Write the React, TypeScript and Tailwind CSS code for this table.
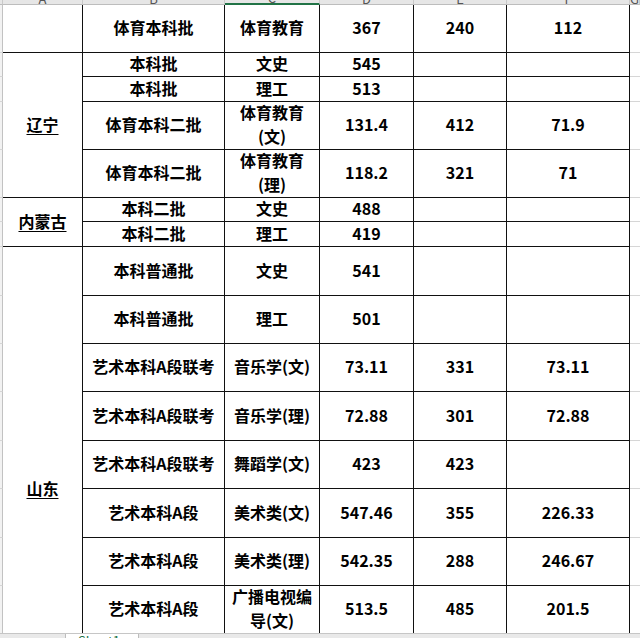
import React from "react";

type Row = { b: string; c: string[]; d: string; e: string; f: string };

const rows: Row[] = [
  { b: "体育本科批", c: ["体育教育"], d: "367", e: "240", f: "112" },
  { b: "本科批", c: ["文史"], d: "545", e: "", f: "" },
  { b: "本科批", c: ["理工"], d: "513", e: "", f: "" },
  { b: "体育本科二批", c: ["体育教育", "(文)"], d: "131.4", e: "412", f: "71.9" },
  { b: "体育本科二批", c: ["体育教育", "(理)"], d: "118.2", e: "321", f: "71" },
  { b: "本科二批", c: ["文史"], d: "488", e: "", f: "" },
  { b: "本科二批", c: ["理工"], d: "419", e: "", f: "" },
  { b: "本科普通批", c: ["文史"], d: "541", e: "", f: "" },
  { b: "本科普通批", c: ["理工"], d: "501", e: "", f: "" },
  { b: "艺术本科A段联考", c: ["音乐学(文)"], d: "73.11", e: "331", f: "73.11" },
  { b: "艺术本科A段联考", c: ["音乐学(理)"], d: "72.88", e: "301", f: "72.88" },
  { b: "艺术本科A段联考", c: ["舞蹈学(文)"], d: "423", e: "423", f: "" },
  { b: "艺术本科A段", c: ["美术类(文)"], d: "547.46", e: "355", f: "226.33" },
  { b: "艺术本科A段", c: ["美术类(理)"], d: "542.35", e: "288", f: "246.67" },
  { b: "艺术本科A段", c: ["广播电视编", "导(文)"], d: "513.5", e: "485", f: "201.5" },
];

// province cell that starts on a given row index
const provinces: Record<number, { name: string; span: string; pad?: string }> = {
  0: { name: "", span: "" },
  1: { name: "辽宁", span: "row-span-4" },
  5: { name: "内蒙古", span: "row-span-2" },
  7: { name: "山东", span: "row-span-8", pad: "pt-[229px] !items-start" },
};

const cell = "flex items-center justify-center text-center border-r border-b border-[#111] leading-6 pb-[3px]";

const Header = () => (
  <div className="grid h-[5px] grid-cols-[3px_80px_142px_95px_94px_93px_123px_10px] overflow-hidden bg-[#e6e6e6]">
    {["", "A", "B", "C", "D", "E", "F", "G"].map((l, i) => (
      <div
        key={i}
        className={`relative flex h-[5px] items-end justify-center overflow-hidden border-r border-[#c9c9c9] ${
          l === "C" ? "border-b-2 border-b-[#217346]" : "border-b border-b-[#bdbdbd]"
        }`}
      >
        <span className="mb-[-1px] text-[13px] font-normal leading-none text-[#555]">{l}</span>
      </div>
    ))}
  </div>
);

const SheetTabs = () => (
  <div className="flex h-[5px] overflow-hidden border-t border-[#c6c6c6] bg-[#e9e9e9]">
    <div className="w-[65px]" />
    <div className="flex w-[74px] justify-start border-x border-[#bdbdbd] bg-white pl-3">
      <span className="text-[13px] font-normal leading-none text-[#217346]">Sheet1</span>
    </div>
  </div>
);

export default function App() {
  return (
    <div className="flex h-[638px] w-[640px] flex-col overflow-hidden bg-white font-[Noto_Sans_CJK_SC,sans-serif] text-[16px] font-bold text-black">
      <Header />
      <div className="h-[628px] overflow-hidden">
        <div className="grid grid-cols-[3px_80px_142px_95px_94px_93px_123px_10px] grid-rows-[48px_24px_25px_48px_48px_24px_25px_49px_48px_48px_49px_48px_49px_48px_48px]">
          {rows.map((r, i) => {
            const p = provinces[i];
            return (
              <React.Fragment key={i}>
                <div className="border-r border-b border-r-[#c2c2c2] border-b-[#d6d6d6] bg-[#f2f2f2]" />
                {p && (
                  <div className={`${cell} ${p.span} ${p.pad ?? ""}`}>
                    {p.name && <span className="underline underline-offset-[3px]">{p.name}</span>}
                  </div>
                )}
                <div className={cell}>{r.b}</div>
                <div className={`${cell} flex-col`}>
                  {r.c.map((t, j) => (
                    <span key={j}>{t}</span>
                  ))}
                </div>
                <div className={cell}>{r.d}</div>
                <div className={cell}>{r.e}</div>
                <div className={cell}>{r.f}</div>
                <div className="border-b border-[#d6d6d6]" />
              </React.Fragment>
            );
          })}
        </div>
      </div>
      <SheetTabs />
    </div>
  );
}
